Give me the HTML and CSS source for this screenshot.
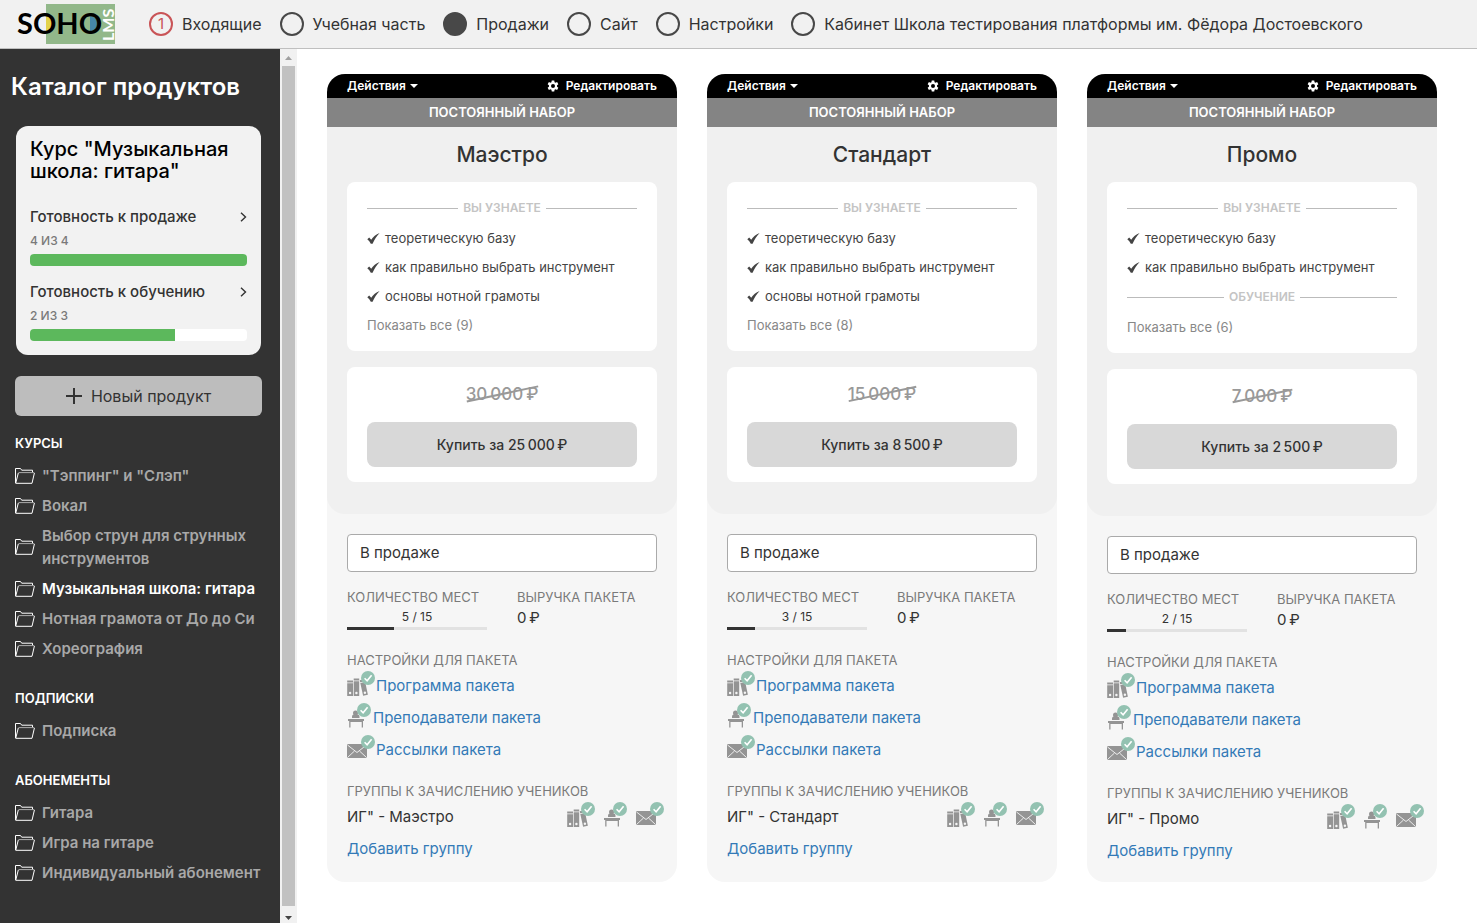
FILE: index.html
```html
<!DOCTYPE html>
<html lang="ru">
<head>
<meta charset="utf-8">
<title>SOHO LMS</title>
<link rel="stylesheet" href="styles.css">
</head>
<body>
<svg class="sprite" aria-hidden="true">
  <symbol id="folder" viewBox="0 0 20 16">
    <path d="M.5 15V.5h5l1.200 1.700h10.800v2.500" fill="none" stroke="#fff"/>
    <path d="M3.500 4.600h15.800" fill="none" stroke="#aaa"/>
    <path d="M3.300 5 .7 15.300H17L19.400 5" fill="none" stroke="#fff"/>
  </symbol>
  <symbol id="done" viewBox="0 0 14 14">
    <circle cx="7" cy="7" r="7" fill="#93c2b1"/>
    <path d="m3.600 7.300 2.500 2.500 4.500-5.500" fill="none" stroke="#fff" stroke-width="1.600"/>
  </symbol>
  <symbol id="books" viewBox="0 0 28 26">
    <g fill="#949494">
      <path d="M.2 9.500h5.800v2H.2zM.2 12.300h5.800V25H.2zM6.700 7.500h5.500v2H6.700zM6.700 10.300h5.500V25H6.700z"/>
      <path d="m12.700 9.200 4.900-1 .5 2-4.900 1zM13.300 12l4.900-1 2.700 12.700-4.800 1.100z"/>
    </g>
    <g fill="#f6f6f6"><circle cx="3.100" cy="22" r="1.200"/><circle cx="9.400" cy="22" r="1.200"/><circle cx="17.900" cy="21.700" r="1.200"/></g>
    <use href="#done" x="14" y="0" width="14" height="14"/>
  </symbol>
  <symbol id="desk" viewBox="0 0 25 26">
    <g fill="#949494">
      <circle cx="8.500" cy="10" r="2.500"/>
      <path d="M5 15v-1.500q0-2 2-2h3.500q2 0 2 2V15zM1 16h16v2h-1v6.500h-1.300V19H3.500v5.500H2.200V18H1z"/>
    </g>
    <use href="#done" x="10" y="0" width="14" height="14"/>
  </symbol>
  <symbol id="mail" viewBox="0 0 28 26">
    <rect x="0" y="9" width="20" height="14" rx="1" fill="#949494"/>
    <path d="m.5 10 9.500 7.500 9.500-7.500M.5 22.500l7-6.500M19.500 22.500l-7-6.500" fill="none" stroke="#f6f6f6" stroke-width=".9"/>
    <use href="#done" x="14" y="0" width="14" height="14"/>
  </symbol>
  <symbol id="check" viewBox="0 0 13 12">
    <path d="M.3 7.300 2.200 5.500l2 2.300C6 5 9 2 12.600.9 9.500 4 7.500 7.500 5.600 11.800H3.800C3 10 1.800 8.500.3 7.300z" fill="#444"/>
  </symbol>
  <symbol id="gear" viewBox="0 0 24 24">
    <path fill="#fff" fill-rule="evenodd" d="M9.500 1h5l.6 3.300 1.900 1.100 3.200-1.200 2.500 4.300-2.600 2.200v2.600l2.600 2.200-2.500 4.300-3.200-1.200-1.900 1.100-.6 3.300h-5l-.6-3.300L7 18.600l-3.200 1.200-2.500-4.300 2.600-2.200v-2.600L1.300 8.500l2.500-4.300L7 5.400l1.900-1.100zM12 8a4 4 0 1 0 0 8 4 4 0 0 0 0-8z"/>
  </symbol>
</svg>

<header class="topbar">
  <a class="logo" href="#" aria-label="SOHO LMS">
    <svg width="98" height="40" viewBox="0 0 98 40">
      <rect x="29" width="69" height="40" fill="#92b88a"/>
      <path d="M29 12a8 8 0 0 1 0 16z" fill="#e3d24a"/>
      <path d="M73 12a8 8 0 0 1 0 16z" fill="#4687a8"/>
      <text class="logo-main" x="0" y="30">SOHO</text>
      <text class="logo-side" transform="translate(97 37) rotate(-90)">LMS</text>
    </svg>
  </a>
  <nav class="menu">
    <a class="menu-item" href="#"><span class="dot dot-alert">1</span>Входящие</a>
    <a class="menu-item" href="#"><span class="dot"></span>Учебная часть</a>
    <a class="menu-item" href="#"><span class="dot dot-active"></span>Продажи</a>
    <a class="menu-item" href="#"><span class="dot"></span>Сайт</a>
    <a class="menu-item" href="#"><span class="dot"></span>Настройки</a>
    <a class="menu-item" href="#"><span class="dot"></span>Кабинет Школа тестирования платформы им. Фёдора Достоевского</a>
  </nav>
</header>

<div class="layout">
  <aside class="sidebar">
    <h1 class="side-title">Каталог продуктов</h1>
    <section class="course">
      <h2 class="course-name">Курс "Музыкальная школа: гитара"</h2>
      <div class="metric">
        <a class="metric-link" href="#">Готовность к продаже<svg width="7" height="10" viewBox="0 0 7 10"><path d="m1 .7 4.500 4.300L1 9.300" fill="none" stroke="#333" stroke-width="1.400"/></svg></a>
        <span class="metric-count">4 ИЗ 4</span>
        <div class="bar"><div class="bar-fill" style="width:100%"></div></div>
      </div>
      <div class="metric">
        <a class="metric-link" href="#">Готовность к обучению<svg width="7" height="10" viewBox="0 0 7 10"><path d="m1 .7 4.500 4.300L1 9.300" fill="none" stroke="#333" stroke-width="1.400"/></svg></a>
        <span class="metric-count">2 ИЗ 3</span>
        <div class="bar"><div class="bar-fill" style="width:67%"></div></div>
      </div>
    </section>
    <button class="new-product" type="button"><svg width="16" height="16" viewBox="0 0 16 16"><path d="M8 0v16M0 8h16" stroke="#333" stroke-width="2"/></svg>Новый продукт</button>

    <h3 class="group-title">КУРСЫ</h3>
    <ul class="group">
      <li><a class="folder" href="#"><svg><use href="#folder"/></svg>"Тэппинг" и "Слэп"</a></li>
      <li><a class="folder" href="#"><svg><use href="#folder"/></svg>Вокал</a></li>
      <li><a class="folder" href="#"><svg><use href="#folder"/></svg>Выбор струн для струнных инструментов</a></li>
      <li><a class="folder folder-current" href="#"><svg><use href="#folder"/></svg>Музыкальная школа: гитара</a></li>
      <li><a class="folder" href="#"><svg><use href="#folder"/></svg>Нотная грамота от До до Си</a></li>
      <li><a class="folder" href="#"><svg><use href="#folder"/></svg>Хореография</a></li>
    </ul>
    <h3 class="group-title">ПОДПИСКИ</h3>
    <ul class="group">
      <li><a class="folder" href="#"><svg><use href="#folder"/></svg>Подписка</a></li>
    </ul>
    <h3 class="group-title">АБОНЕМЕНТЫ</h3>
    <ul class="group">
      <li><a class="folder" href="#"><svg><use href="#folder"/></svg>Гитара</a></li>
      <li><a class="folder" href="#"><svg><use href="#folder"/></svg>Игра на гитаре</a></li>
      <li><a class="folder" href="#"><svg><use href="#folder"/></svg>Индивидуальный абонемент</a></li>
    </ul>
  </aside>
  <div class="scroll" aria-hidden="true">
    <svg width="17" height="17" viewBox="0 0 17 17"><path d="m5 11 3.500-4 3.500 4z" fill="#a0a0a0"/></svg>
    <div class="scroll-thumb"></div>
    <svg width="17" height="17" viewBox="0 0 17 17"><path d="m5 10 3.500 4 3.500-4z" fill="#444"/></svg>
  </div>

  <main class="packages">
    <article class="package">
      <div class="tools">
        <button class="tool" type="button">Действия<span class="caret"></span></button>
        <a class="tool" href="#"><svg class="gear"><use href="#gear"/></svg>Редактировать</a>
      </div>
      <div class="ribbon">ПОСТОЯННЫЙ НАБОР</div>
      <div class="offer">
        <h2 class="package-name">Маэстро</h2>
        <div class="panel features">
          <div class="divider">ВЫ УЗНАЕТЕ</div>
          <div class="feature"><svg><use href="#check"/></svg>теоретическую базу</div>
          <div class="feature"><svg><use href="#check"/></svg>как правильно выбрать инструмент</div>
          <div class="feature"><svg><use href="#check"/></svg>основы нотной грамоты</div>
          <a class="more" href="#">Показать все (9)</a>
        </div>
        <div class="panel purchase">
          <span class="old-price">30&#8201;000&#8201;₽</span>
          <button class="buy" type="button">Купить за 25&#8201;000&#8201;₽</button>
        </div>
      </div>
      <div class="manage">
        <select class="status" aria-label="Статус пакета Маэстро"><option>В продаже</option></select>
        <div class="stats">
          <div class="stat"><span class="caption">КОЛИЧЕСТВО МЕСТ</span><span class="seats-value">5 / 15</span><div class="seats-bar"><div class="seats-fill" style="width:33.300%"></div></div></div>
          <div class="stat"><span class="caption">ВЫРУЧКА ПАКЕТА</span><span class="revenue">0&#8201;₽</span></div>
        </div>
        <span class="caption">НАСТРОЙКИ ДЛЯ ПАКЕТА</span>
        <a class="setting" href="#"><svg class="icon"><use href="#books"/></svg>Программа пакета</a>
        <a class="setting" href="#"><svg class="icon icon-desk"><use href="#desk"/></svg>Преподаватели пакета</a>
        <a class="setting" href="#"><svg class="icon"><use href="#mail"/></svg>Рассылки пакета</a>
        <span class="caption caption-groups">ГРУППЫ К ЗАЧИСЛЕНИЮ УЧЕНИКОВ</span>
        <div class="enrol"><span>ИГ" - Маэстро</span><span class="enrol-icons"><svg class="icon"><use href="#books"/></svg><svg class="icon icon-desk"><use href="#desk"/></svg><svg class="icon"><use href="#mail"/></svg></span></div>
        <a class="setting" href="#">Добавить группу</a>
      </div>
    </article>

    <article class="package">
      <div class="tools">
        <button class="tool" type="button">Действия<span class="caret"></span></button>
        <a class="tool" href="#"><svg class="gear"><use href="#gear"/></svg>Редактировать</a>
      </div>
      <div class="ribbon">ПОСТОЯННЫЙ НАБОР</div>
      <div class="offer">
        <h2 class="package-name">Стандарт</h2>
        <div class="panel features">
          <div class="divider">ВЫ УЗНАЕТЕ</div>
          <div class="feature"><svg><use href="#check"/></svg>теоретическую базу</div>
          <div class="feature"><svg><use href="#check"/></svg>как правильно выбрать инструмент</div>
          <div class="feature"><svg><use href="#check"/></svg>основы нотной грамоты</div>
          <a class="more" href="#">Показать все (8)</a>
        </div>
        <div class="panel purchase">
          <span class="old-price">15&#8201;000&#8201;₽</span>
          <button class="buy" type="button">Купить за 8&#8201;500&#8201;₽</button>
        </div>
      </div>
      <div class="manage">
        <select class="status" aria-label="Статус пакета Стандарт"><option>В продаже</option></select>
        <div class="stats">
          <div class="stat"><span class="caption">КОЛИЧЕСТВО МЕСТ</span><span class="seats-value">3 / 15</span><div class="seats-bar"><div class="seats-fill" style="width:20%"></div></div></div>
          <div class="stat"><span class="caption">ВЫРУЧКА ПАКЕТА</span><span class="revenue">0&#8201;₽</span></div>
        </div>
        <span class="caption">НАСТРОЙКИ ДЛЯ ПАКЕТА</span>
        <a class="setting" href="#"><svg class="icon"><use href="#books"/></svg>Программа пакета</a>
        <a class="setting" href="#"><svg class="icon icon-desk"><use href="#desk"/></svg>Преподаватели пакета</a>
        <a class="setting" href="#"><svg class="icon"><use href="#mail"/></svg>Рассылки пакета</a>
        <span class="caption caption-groups">ГРУППЫ К ЗАЧИСЛЕНИЮ УЧЕНИКОВ</span>
        <div class="enrol"><span>ИГ" - Стандарт</span><span class="enrol-icons"><svg class="icon"><use href="#books"/></svg><svg class="icon icon-desk"><use href="#desk"/></svg><svg class="icon"><use href="#mail"/></svg></span></div>
        <a class="setting" href="#">Добавить группу</a>
      </div>
    </article>

    <article class="package">
      <div class="tools">
        <button class="tool" type="button">Действия<span class="caret"></span></button>
        <a class="tool" href="#"><svg class="gear"><use href="#gear"/></svg>Редактировать</a>
      </div>
      <div class="ribbon">ПОСТОЯННЫЙ НАБОР</div>
      <div class="offer">
        <h2 class="package-name">Промо</h2>
        <div class="panel features">
          <div class="divider">ВЫ УЗНАЕТЕ</div>
          <div class="feature"><svg><use href="#check"/></svg>теоретическую базу</div>
          <div class="feature"><svg><use href="#check"/></svg>как правильно выбрать инструмент</div>
          <div class="divider">ОБУЧЕНИЕ</div>
          <a class="more" href="#">Показать все (6)</a>
        </div>
        <div class="panel purchase">
          <span class="old-price">7&#8201;000&#8201;₽</span>
          <button class="buy" type="button">Купить за 2&#8201;500&#8201;₽</button>
        </div>
      </div>
      <div class="manage">
        <select class="status" aria-label="Статус пакета Промо"><option>В продаже</option></select>
        <div class="stats">
          <div class="stat"><span class="caption">КОЛИЧЕСТВО МЕСТ</span><span class="seats-value">2 / 15</span><div class="seats-bar"><div class="seats-fill" style="width:13.300%"></div></div></div>
          <div class="stat"><span class="caption">ВЫРУЧКА ПАКЕТА</span><span class="revenue">0&#8201;₽</span></div>
        </div>
        <span class="caption">НАСТРОЙКИ ДЛЯ ПАКЕТА</span>
        <a class="setting" href="#"><svg class="icon"><use href="#books"/></svg>Программа пакета</a>
        <a class="setting" href="#"><svg class="icon icon-desk"><use href="#desk"/></svg>Преподаватели пакета</a>
        <a class="setting" href="#"><svg class="icon"><use href="#mail"/></svg>Рассылки пакета</a>
        <span class="caption caption-groups">ГРУППЫ К ЗАЧИСЛЕНИЮ УЧЕНИКОВ</span>
        <div class="enrol"><span>ИГ" - Промо</span><span class="enrol-icons"><svg class="icon"><use href="#books"/></svg><svg class="icon icon-desk"><use href="#desk"/></svg><svg class="icon"><use href="#mail"/></svg></span></div>
        <a class="setting" href="#">Добавить группу</a>
      </div>
    </article>
  </main>
</div>
</body>
</html>
```
FILE: styles.css
```css
*, *::before, *::after { box-sizing: border-box; }

body {
  margin: 0;
  min-height: 100vh;
  display: flex;
  flex-direction: column;
  background: #fff;
  color: #333;
  font-family: Inter, "Liberation Sans", sans-serif;
  font-size: 15px;
  line-height: 22px;
}

h1, h2, h3, ul { margin: 0; padding: 0; list-style: none; }
a { color: inherit; text-decoration: none; }
button { border: 0; padding: 0; font: inherit; color: inherit; background: none; cursor: pointer; }
svg { flex: none; display: block; }
.sprite { position: absolute; width: 0; height: 0; }

/* Top bar */
.topbar {
  display: flex;
  align-items: center;
  gap: 34px;
  padding: 4px 17px;
  background: #f1f1f1;
  border-bottom: 1px solid #bfbfbf;
}
.logo-main { font: 700 29px Lato, sans-serif; fill: #000; }
.logo-side { font: 700 16px Lato, sans-serif; fill: #fff; }
.menu { display: flex; gap: 18px; white-space: nowrap; font-size: 16px; }
.menu-item { display: flex; align-items: center; gap: 9px; }
.dot {
  display: flex;
  align-items: center;
  justify-content: center;
  width: 24px;
  height: 24px;
  border: 2px solid #484848;
  border-radius: 50%;
}
.dot-active { background: #484848; }
.dot-alert { border-color: #c95457; color: #c95457; font-size: 15px; }

/* Sidebar */
.layout { flex: 1; display: flex; }
.sidebar { flex: none; width: 280px; padding: 22px 18px 0 15px; background: #333; }
.side-title { margin: 0 -4px 23px; color: #fff; font-size: 24px; font-weight: 600; line-height: 32px; }
.course { margin: 0 1px 21px; padding: 12px 14px 14px; background: #f2f2f2; border-radius: 12px; }
.course-name { margin-bottom: 24px; color: #000; font-size: 20px; font-weight: 500; line-height: 22px; }
.metric { display: flex; flex-direction: column; gap: 4px; }
.metric + .metric { margin-top: 15px; }
.metric-link { display: flex; align-items: center; justify-content: space-between; font-weight: 500; }
.metric-count { color: #7a7a7a; font-size: 12px; font-weight: 500; line-height: 18px; }
.bar { height: 12px; background: #fff; border-radius: 4px; overflow: hidden; }
.bar-fill { height: 100%; background: #5cb85c; }
.new-product {
  display: flex;
  align-items: center;
  justify-content: center;
  gap: 9px;
  width: 100%;
  height: 40px;
  margin-bottom: 18px;
  background: #bdbdbd;
  border-radius: 6px;
  font-size: 16px;
}
.group-title { margin-bottom: 12px; color: #fff; font-size: 13px; font-weight: 600; line-height: 18px; }
.group { display: flex; flex-direction: column; gap: 7px; margin: 0 -18px 29px 0; }
.folder { display: flex; align-items: center; gap: 7px; color: #a8a8a8; font-weight: 600; line-height: 23px; }
.folder svg { width: 20px; height: 16px; }
.folder-current { color: #fff; }

.scroll { flex: none; display: flex; flex-direction: column; width: 17px; background: #f1f1f1; }
.scroll-thumb { flex: 1; margin: 0 2px; background: #c1c1c1; }

/* Packages */
.packages {
  flex: 1;
  display: grid;
  grid-template-columns: repeat(3, 1fr);
  align-content: start;
  gap: 30px;
  padding: 25px 40px 25px 30px;
}
.package { background: #f6f6f6; border-radius: 18px; overflow: hidden; }
.tools { display: flex; justify-content: space-between; height: 24px; padding: 0 20px; background: #000; color: #fff; }
.tool { display: flex; align-items: center; gap: 4px; font-size: 12px; font-weight: 600; line-height: 22px; }
.caret { border: 4px solid transparent; border-top-color: #fff; border-bottom: 0; }
.gear { width: 12px; height: 12px; margin-right: 3px; }
.ribbon { background: #848484; color: #fff; font-size: 13px; font-weight: 600; line-height: 29px; text-align: center; }
.offer { padding: 15px 20px 32px; background: #f0f0f0; border-radius: 0 0 18px 18px; }
.package-name { margin-bottom: 14px; font-size: 21px; font-weight: 500; line-height: 26px; text-align: center; }
.panel { display: flex; flex-direction: column; background: #fff; border-radius: 8px; }
.features { gap: 9px; margin-bottom: 16px; padding: 15px 20px 16px; font-size: 13px; line-height: 20px; }
.divider { display: flex; align-items: center; gap: 5px; color: #c4c4c4; font-size: 12px; font-weight: 600; line-height: 22px; }
.divider::before, .divider::after { content: ""; flex: 1; height: 1px; background: #bbb; }
.feature { display: flex; align-items: center; gap: 5px; color: #444; }
.feature svg { width: 13px; height: 12px; }
.more { color: #888; }
.purchase { align-items: center; gap: 16px; padding: 15px 20px; }
.old-price { position: relative; color: #999; font-size: 17px; font-weight: 500; line-height: 24px; }
.old-price::after {
  content: "";
  position: absolute;
  top: 11px;
  left: 0;
  right: 0;
  height: 2px;
  background: #999;
  transform: rotate(-12deg);
}
.buy { width: 100%; height: 45px; background: #d8d8d8; border-radius: 8px; font-size: 14px; font-weight: 500; }

.manage { display: flex; flex-direction: column; padding: 20px 20px 15px; }
.status {
  appearance: none;
  width: 100%;
  height: 38px;
  margin-bottom: 15px;
  padding: 0 12px;
  border: 1px solid #aaa;
  border-radius: 4px;
  background: #fff;
  color: #333;
  font: inherit;
}
.stats { display: grid; grid-template-columns: 1fr 1fr; gap: 30px; margin-bottom: 20px; }
.stat { display: flex; flex-direction: column; }
.caption { color: #7a7a7a; font-size: 13px; line-height: 20px; white-space: nowrap; }
.caption-groups { margin-top: 15px; }
.seats-value { font-size: 12px; line-height: 20px; text-align: center; }
.seats-bar { height: 3px; background: #e2e2e2; }
.seats-fill { height: 100%; background: #333; }
.setting { display: flex; align-items: center; gap: 1px; color: #337ab7; line-height: 32px; }
.icon { width: 28px; height: 26px; margin-bottom: 4px; }
.icon-desk { width: 25px; }
.enrol { display: flex; align-items: center; justify-content: space-between; line-height: 32px; }
.enrol-icons { display: flex; gap: 8px; margin-right: -7px; }
```
